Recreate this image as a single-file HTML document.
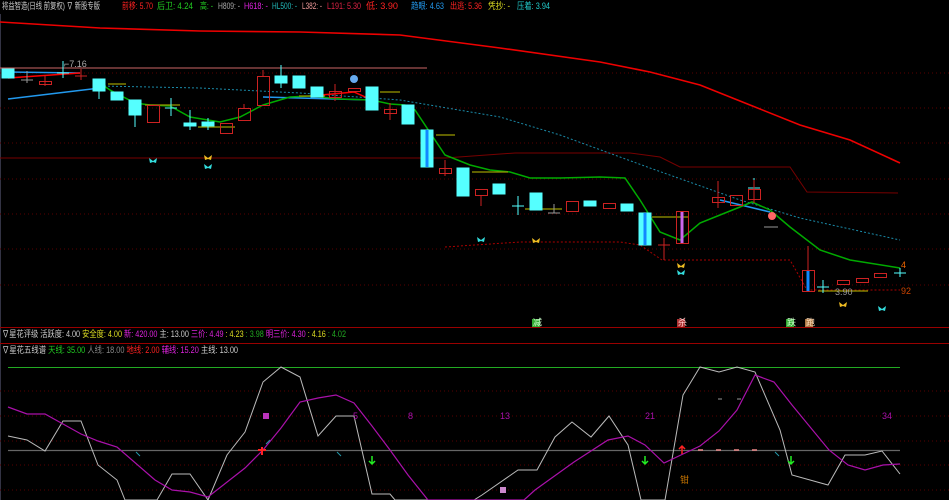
<!DOCTYPE html>
<html><head><meta charset="utf-8"><style>
html,body{margin:0;padding:0;background:#000;width:949px;height:500px;overflow:hidden}
svg{display:block}
text{font-family:"Liberation Sans","Noto Sans CJK SC",sans-serif;font-size:9px}
</style></head><body>
<svg width="949" height="500" viewBox="0 0 949 500">
<rect width="949" height="500" fill="#000"/>
<line x1="0.5" y1="14" x2="0.5" y2="500" stroke="#334" />
<g stroke="#5a0000" stroke-dasharray="1,3" stroke-width="1">
<line x1="0" y1="73" x2="949" y2="73"/><line x1="0" y1="108" x2="949" y2="108"/>
<line x1="0" y1="143" x2="949" y2="143"/><line x1="0" y1="179" x2="949" y2="179"/>
<line x1="0" y1="214" x2="949" y2="214"/><line x1="0" y1="249" x2="949" y2="249"/>
<line x1="0" y1="285" x2="949" y2="285"/>
<line x1="0" y1="391" x2="949" y2="391"/><line x1="0" y1="416" x2="949" y2="416"/>
<line x1="0" y1="441" x2="949" y2="441"/><line x1="0" y1="465" x2="949" y2="465"/>
<line x1="0" y1="490" x2="949" y2="490"/>
</g>
<!-- header -->
<g font-size="8.5" lengthAdjust="spacingAndGlyphs">
<text x="2" y="9" fill="#ccc" textLength="98" lengthAdjust="spacingAndGlyphs">将益智造(日线 前复权) ∇ 新股专版</text>
<text x="122" y="9" fill="#f22" textLength="31" lengthAdjust="spacingAndGlyphs">前移: 5.70</text>
<text x="157" y="9" fill="#2c2" textLength="36" lengthAdjust="spacingAndGlyphs">后卫: 4.24</text>
<text x="200" y="9" fill="#2c2" textLength="13" lengthAdjust="spacingAndGlyphs">高: -</text>
<text x="218" y="9" fill="#aaa" textLength="22" lengthAdjust="spacingAndGlyphs">H809: -</text>
<text x="244" y="9" fill="#d2d" textLength="24" lengthAdjust="spacingAndGlyphs">H618: -</text>
<text x="272" y="9" fill="#2bb" textLength="25" lengthAdjust="spacingAndGlyphs">HL500: -</text>
<text x="302" y="9" fill="#e99" textLength="20" lengthAdjust="spacingAndGlyphs">L382: -</text>
<text x="327" y="9" fill="#d24" textLength="34" lengthAdjust="spacingAndGlyphs">L191: 5.30</text>
<text x="366" y="9" fill="#f22" textLength="32" lengthAdjust="spacingAndGlyphs">低: 3.90</text>
<text x="411" y="9" fill="#29e" textLength="33" lengthAdjust="spacingAndGlyphs">趋眼: 4.63</text>
<text x="450" y="9" fill="#f22" textLength="32" lengthAdjust="spacingAndGlyphs">出逃: 5.36</text>
<text x="488" y="9" fill="#dd2" textLength="22" lengthAdjust="spacingAndGlyphs">凭抄: -</text>
<text x="517" y="9" fill="#2cc" textLength="33" lengthAdjust="spacingAndGlyphs">压着: 3.94</text>
</g>
<polyline fill="none" stroke="#e00" stroke-width="1.6" points="0,22 100,28 200,31 300,32 400,35 500,48 600,62 650,72 700,85 750,105 800,125 850,140 900,163"/>
<line x1="0" y1="68" x2="427" y2="68" stroke="#c66" stroke-width="1"/>
<polyline fill="none" stroke="#700" stroke-width="1" points="0,158 420,158 445,158 515,153 630,153 660,157 680,167 790,167 807,192 898,193"/>
<polyline fill="none" stroke="#1a8aa8" stroke-width="1" stroke-dasharray="2,2" points="100,86 200,88 300,93 400,100 500,117 560,135 650,168 740,200 800,218 900,240"/>
<polyline fill="none" stroke="#a00" stroke-width="1" stroke-dasharray="2,2" points="445,247 520,242 620,242 640,245 662,260 790,260 807,290 900,290"/>
<polyline fill="none" stroke="#29e" stroke-width="1.5" points="8,99 100,88"/>
<polyline fill="none" stroke="#29e" stroke-width="1.5" points="263,97 372,100"/>
<polyline fill="none" stroke="#29e" stroke-width="1.5" points="720,200 770,212"/>
<polyline fill="none" stroke="#29e" stroke-width="1.5" points="8,72 80,73"/>
<polyline fill="none" stroke="#0a0" stroke-width="1.5" points="95,80 110,90 135,103 150,105 170,106 190,117 220,122 240,117 263,105 290,97 310,96 340,99 372,100 390,104 405,105 415,110 445,155 470,165 490,170 510,172 530,178 560,178 600,177 625,178 640,200 660,232 680,240 700,223 720,215 740,207 752,202 770,210 790,227 820,250 850,260 900,268"/>
<polyline fill="none" stroke="#f00" stroke-width="1.5" points="8,78 80,73"/>
<polyline fill="none" stroke="#f00" stroke-width="1.5" points="310,96 354,92 372,100"/>
<g stroke="#990" stroke-width="1.2">
<line x1="108" y1="84" x2="126" y2="84"/><line x1="145" y1="105" x2="180" y2="105"/>
<line x1="198" y1="127" x2="235" y2="127"/><line x1="299" y1="96" x2="325" y2="96"/>
<line x1="380" y1="92" x2="400" y2="92"/><line x1="436" y1="135" x2="455" y2="135"/>
<line x1="472" y1="172" x2="508" y2="172"/><line x1="525" y1="209" x2="562" y2="209"/>
<line x1="652" y1="217" x2="688" y2="217"/><line x1="818" y1="291" x2="868" y2="291"/>
</g>
<g stroke-width="1">
<g fill="#5ff" stroke="#5ff">
<rect x="2" y="69" width="12" height="9"/><rect x="93" y="79" width="12" height="12"/><line x1="99" y1="91" x2="99" y2="99"/>
<rect x="111" y="92" width="12" height="8"/><rect x="129" y="100" width="12" height="15"/><line x1="135" y1="115" x2="135" y2="127"/>
<rect x="184" y="123" width="12" height="3"/><line x1="190" y1="110" x2="190" y2="130"/>
<rect x="202" y="122" width="12" height="4"/><line x1="208" y1="118" x2="208" y2="130"/>
<rect x="275" y="76" width="12" height="7"/><line x1="281" y1="65" x2="281" y2="88"/>
<rect x="293" y="76" width="12" height="12"/><rect x="311" y="87" width="12" height="10"/>
<rect x="366" y="87" width="12" height="23"/><rect x="402" y="105" width="12" height="19"/>
<rect x="421" y="130" width="12" height="37"/>
<rect x="457" y="168" width="12" height="28"/><rect x="493" y="184" width="12" height="10"/>
<rect x="530" y="193" width="12" height="17"/><rect x="584" y="201" width="12" height="5"/>
<rect x="621" y="204" width="12" height="7"/><rect x="639" y="213" width="12" height="32"/>
</g>
<line x1="427" y1="130" x2="427" y2="167" stroke="#18f" stroke-width="3"/>
<line x1="645" y1="213" x2="645" y2="245" stroke="#18f" stroke-width="3"/>
<g stroke="#5ff">
<line x1="57" y1="73" x2="69" y2="73"/><line x1="63" y1="61" x2="63" y2="78"/>
<line x1="165" y1="108" x2="177" y2="108"/><line x1="171" y1="98" x2="171" y2="116"/>
<line x1="512" y1="206" x2="524" y2="206"/><line x1="518" y1="196" x2="518" y2="215"/>
<line x1="748" y1="188" x2="760" y2="188"/><line x1="754" y1="178" x2="754" y2="195"/>
<line x1="817" y1="287" x2="829" y2="287"/><line x1="823" y1="280" x2="823" y2="293"/>
<line x1="894" y1="273" x2="906" y2="273"/><line x1="900" y1="268" x2="900" y2="277"/>
</g>
<g stroke="#999"><line x1="21" y1="80" x2="33" y2="80"/><line x1="27" y1="71" x2="27" y2="83"/>
<line x1="548" y1="213" x2="560" y2="213"/><line x1="554" y1="204" x2="554" y2="213"/></g>
<g fill="none" stroke="#c22">
<rect x="39.5" y="81.5" width="12" height="3"/><line x1="45" y1="75" x2="45" y2="86"/>
<line x1="75" y1="76" x2="87" y2="76"/><line x1="81" y1="69" x2="81" y2="80"/>
<rect x="147.5" y="105.5" width="12" height="17"/>
<rect x="220.5" y="123.5" width="12" height="10"/>
<rect x="238.5" y="108.5" width="12" height="12"/><line x1="244" y1="104" x2="244" y2="108"/>
<rect x="257.5" y="76.5" width="12" height="29"/><line x1="263" y1="70" x2="263" y2="76"/>
<rect x="329.5" y="91.5" width="12" height="6"/><line x1="335" y1="84" x2="335" y2="101"/>
<rect x="348.5" y="88.5" width="12" height="3"/>
<rect x="384.5" y="109.5" width="12" height="4"/><line x1="390" y1="103" x2="390" y2="120"/>
<rect x="439.5" y="168.5" width="12" height="5"/><line x1="445" y1="160" x2="445" y2="176"/>
<rect x="475.5" y="189.5" width="12" height="6"/><line x1="481" y1="195" x2="481" y2="206"/>
<rect x="566.5" y="201.5" width="12" height="10"/>
<rect x="603.5" y="203.5" width="12" height="5"/>
<rect x="676.5" y="211.5" width="12" height="32"/>
<rect x="712.5" y="197.5" width="12" height="5"/><line x1="718" y1="181" x2="718" y2="208"/>
<rect x="730.5" y="195.5" width="12" height="10"/>
<rect x="748.5" y="189.5" width="12" height="10"/><line x1="754" y1="180" x2="754" y2="203"/>
<rect x="802.5" y="270.5" width="12" height="21"/><line x1="808" y1="246" x2="808" y2="270"/>
<rect x="837.5" y="280.5" width="12" height="4"/>
<rect x="856.5" y="278.5" width="12" height="4"/>
<rect x="874.5" y="273.5" width="12" height="4"/>
<line x1="658" y1="245" x2="670" y2="245"/><line x1="664" y1="238" x2="664" y2="260"/>
</g>
<line x1="682" y1="212" x2="682" y2="243" stroke="#c6e" stroke-width="3"/>
<line x1="808" y1="271" x2="808" y2="291" stroke="#18f" stroke-width="3"/>
</g>
<circle cx="354" cy="79" r="4" fill="#6ae"/>
<circle cx="772" cy="216" r="4" fill="#f66"/>
<line x1="764" y1="227" x2="778" y2="227" stroke="#999"/>
<g>
<path d="M149,158 l4,3 l4,-3 l-1,5 l-3,-1 l-3,1z" fill="#3dd"/>
<path d="M204,155 l4,3 l4,-3 l-1,5 l-3,-1 l-3,1z" fill="#eb2"/>
<path d="M204,164 l4,3 l4,-3 l-1,5 l-3,-1 l-3,1z" fill="#3dd"/>
<path d="M477,237 l4,3 l4,-3 l-1,5 l-3,-1 l-3,1z" fill="#3dd"/>
<path d="M532,238 l4,3 l4,-3 l-1,5 l-3,-1 l-3,1z" fill="#eb2"/>
<path d="M677,263 l4,3 l4,-3 l-1,5 l-3,-1 l-3,1z" fill="#eb2"/>
<path d="M677,270 l4,3 l4,-3 l-1,5 l-3,-1 l-3,1z" fill="#3dd"/>
<path d="M839,302 l4,3 l4,-3 l-1,5 l-3,-1 l-3,1z" fill="#eb2"/>
<path d="M878,306 l4,3 l4,-3 l-1,5 l-3,-1 l-3,1z" fill="#3dd"/>
</g>
<text x="64" y="67" fill="#aaa">⌐7.16</text>
<text x="901" y="268" fill="#e60">4</text>
<text x="835" y="295" fill="#999">3.90</text>
<text x="901" y="294" fill="#c40">92</text>
<rect x="532" y="319" width="8" height="8" fill="#3a3"/><text x="533" y="325.5" fill="#cfc" font-size="6">减</text>
<rect x="677" y="319" width="8" height="8" fill="#a33"/><text x="678" y="325.5" fill="#fcc" font-size="6">杀</text>
<rect x="786" y="319" width="8" height="8" fill="#3a3"/><text x="787" y="325.5" fill="#cfc" font-size="6">跌</text>
<rect x="805" y="319" width="8" height="8" fill="#a74"/><text x="806" y="325.5" fill="#fdb" font-size="6">跑</text>
<line x1="0" y1="327.5" x2="949" y2="327.5" stroke="#900"/>
<line x1="0" y1="343.5" x2="949" y2="343.5" stroke="#900"/>
<text x="2" y="337" fill="#ccc" font-size="8.5" textLength="344" lengthAdjust="spacingAndGlyphs">∇星花评级 <tspan fill="#ccc">活跃度: 4.00</tspan> <tspan fill="#dd2">安全度: 4.00</tspan> <tspan fill="#d2d">新: 420.00</tspan> <tspan fill="#ccc">主: 13.00</tspan> <tspan fill="#d2d">三价: 4.49</tspan><tspan fill="#dd2"> : 4.23</tspan><tspan fill="#2a2"> : 3.98</tspan> <tspan fill="#d2d">明三价: 4.30</tspan><tspan fill="#dd2"> : 4.16</tspan><tspan fill="#2a2"> : 4.02</tspan></text>
<text x="2" y="353" fill="#ccc" font-size="8.5" textLength="236" lengthAdjust="spacingAndGlyphs">∇星花五线谱 <tspan fill="#2c2">天线: 35.00</tspan>   <tspan fill="#888">人线: 18.00</tspan> <tspan fill="#f22">地线: 2.00</tspan> <tspan fill="#d2d">辅线: 15.20</tspan> <tspan fill="#ccc">主线: 13.00</tspan></text>
<line x1="8" y1="367.5" x2="900" y2="367.5" stroke="#2a2"/>
<line x1="8" y1="450.5" x2="900" y2="450.5" stroke="#666" stroke-width="1.2"/>
<polyline fill="none" stroke="#bbb" stroke-width="1" points="8,436 27,440 45,451 63,421 81,421 98,465 117,480 125,500 157,500 172,474 190,474 208,500 227,455 245,432 263,382 281,367 300,377 318,436 336,416 354,416 372,494 390,494 395,500 474,500 482,495 518,470 537,470 555,437 572,422 591,437 609,416 628,445 641,500 665,500 683,395 700,367 719,372 737,367 755,372 780,430 792,475 828,485 845,455 865,455 882,451 900,474"/>
<polyline fill="none" stroke="#a1a" stroke-width="1.2" points="8,407 27,414 45,414 63,424 81,434 98,441 117,447 155,480 172,490 190,492 208,497 245,468 263,450 281,428 300,402 318,398 336,395 354,403 372,426 390,450 408,475 428,500 524,500 535,490 574,462 608,440 628,436 645,445 664,463 683,454 700,446 719,431 737,410 755,375 774,382 792,405 829,450 848,465 865,470 883,465 900,464"/>
<g fill="#a1a" font-size="8">
<text x="353" y="419">5</text><text x="408" y="419">8</text><text x="500" y="419">13</text><text x="645" y="419">21</text><text x="882" y="419">34</text>
</g>
<rect x="263" y="413" width="6" height="6" fill="#b3b"/>
<path d="M262,447 v8 M258,450 h8" stroke="#f22" stroke-width="2"/>
<path d="M372,456 v8 M369,461 l3,3 l3,-3" stroke="#2e2" stroke-width="1.5" fill="none"/>
<path d="M645,456 v8 M642,461 l3,3 l3,-3" stroke="#2e2" stroke-width="1.5" fill="none"/>
<path d="M791,456 v8 M788,461 l3,3 l3,-3" stroke="#2e2" stroke-width="1.5" fill="none"/>
<path d="M682,446 v8 M679,449 l3,-3 l3,3" stroke="#f22" stroke-width="1.5" fill="none"/>
<g stroke="#e88" stroke-width="1.5"><line x1="698" y1="450" x2="703" y2="450"/><line x1="716" y1="450" x2="721" y2="450"/><line x1="734" y1="450" x2="739" y2="450"/><line x1="752" y1="450" x2="757" y2="450"/></g>
<g stroke="#29a" stroke-width="1"><line x1="136" y1="452" x2="140" y2="456"/><line x1="337" y1="452" x2="341" y2="456"/><line x1="775" y1="452" x2="779" y2="456"/><line x1="266" y1="444" x2="270" y2="440"/></g>
<text x="680" y="483" fill="#c70" font-size="8">钳</text>
<rect x="500" y="487" width="6" height="6" fill="#c8c"/>
<g stroke="#999"><line x1="718" y1="399" x2="722" y2="399"/><line x1="737" y1="399" x2="741" y2="399"/></g>
</svg>
</body></html>
